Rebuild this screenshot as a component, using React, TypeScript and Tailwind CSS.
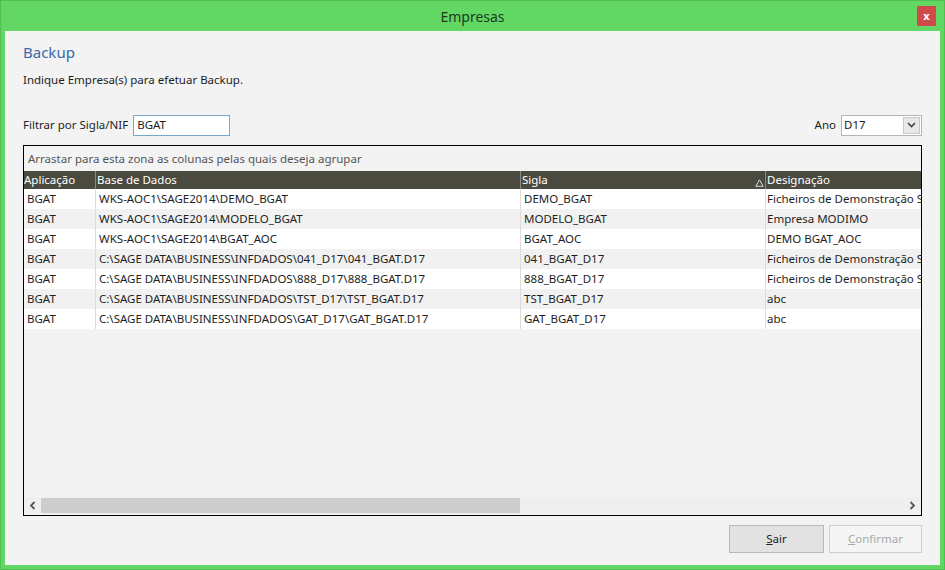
import React from "react";

const rows = [
  ["BGAT", "WKS-AOC1\\SAGE2014\\DEMO_BGAT", "DEMO_BGAT", "Ficheiros de Demonstração Sage"],
  ["BGAT", "WKS-AOC1\\SAGE2014\\MODELO_BGAT", "MODELO_BGAT", "Empresa MODIMO"],
  ["BGAT", "WKS-AOC1\\SAGE2014\\BGAT_AOC", "BGAT_AOC", "DEMO BGAT_AOC"],
  ["BGAT", "C:\\SAGE DATA\\BUSINESS\\INFDADOS\\041_D17\\041_BGAT.D17", "041_BGAT_D17", "Ficheiros de Demonstração Sage"],
  ["BGAT", "C:\\SAGE DATA\\BUSINESS\\INFDADOS\\888_D17\\888_BGAT.D17", "888_BGAT_D17", "Ficheiros de Demonstração Sage"],
  ["BGAT", "C:\\SAGE DATA\\BUSINESS\\INFDADOS\\TST_D17\\TST_BGAT.D17", "TST_BGAT_D17", "abc"],
  ["BGAT", "C:\\SAGE DATA\\BUSINESS\\INFDADOS\\GAT_D17\\GAT_BGAT.D17", "GAT_BGAT_D17", "abc"],
];

export default function App() {
  return (
    <div
      className="w-[945px] h-[570px] bg-[#63d764] border border-[#4fbf52] flex flex-col overflow-hidden"
      style={{ fontFamily: '"Noto Sans", "Open Sans", sans-serif' }}
    >
      <div className="h-[30px] relative flex items-center justify-center shrink-0">
        <span className="text-[14px] text-[#1b3d1b]">Empresas</span>
        <div className="absolute right-[8px] top-[5px] w-[19px] h-[20px] bg-[#cf4b4b] flex items-center justify-center text-white text-[11px] font-bold leading-none pb-[2px]">
          x
        </div>
      </div>
      <div className="mx-[4px] mb-[4px] flex-1 bg-[#f3f3f3] px-[18px] flex flex-col text-[11.5px] text-[#1e1e1e]">
        <div className="mt-[11px] text-[15px] leading-[20px] text-[#3a68a8]">Backup</div>
        <div className="mt-[10px] leading-[16px]">Indique Empresa(s) para efetuar Backup.</div>
        <div className="mt-[26px] flex items-center h-[22px]">
          <span>Filtrar por Sigla/NIF</span>
          <div className="ml-[5px] w-[97px] h-[21px] border border-[#7aa7c9] bg-white flex items-center px-[3px]">BGAT</div>
          <div className="flex-1" />
          <span className="mr-[5px]">Ano</span>
          <div className="w-[81px] h-[21px] border border-[#b5b5b5] bg-white flex items-center">
            <span className="pl-[2px] flex-1">D17</span>
            <div className="w-[17px] h-[17px] mr-[1px] border border-[#c9c9c9] bg-[#e8e8e8] flex items-center justify-center">
              <svg width="9" height="6" viewBox="0 0 9 6">
                <path d="M1 1 L4.5 4.5 L8 1" stroke="#444" strokeWidth="1.6" fill="none" />
              </svg>
            </div>
          </div>
        </div>
        <div className="mt-[9px] h-[371px] border border-black bg-[#f3f3f3] flex flex-col">
          <div className="h-[25px] flex items-center pl-[4px] text-[#555]">
            Arrastar para esta zona as colunas pelas quais deseja agrupar
          </div>
          <div className="h-[18px] bg-[#4b4a40] text-white flex leading-[18px] overflow-hidden">
            <div className="w-[72px] shrink-0 border-r border-[#8a8a80]">Aplicação</div>
            <div className="w-[425px] shrink-0 border-r border-[#8a8a80] pl-[1px]">Base de Dados</div>
            <div className="w-[245px] shrink-0 border-r border-[#8a8a80] pl-[1px] relative">
              Sigla
              <svg className="absolute right-[1px] top-[8px]" width="9" height="8" viewBox="0 0 9 8">
                <path d="M4.5 0.8 L8.2 7.3 L0.8 7.3 Z" stroke="#ddd" strokeWidth="1" fill="none" />
              </svg>
            </div>
            <div className="flex-1 whitespace-nowrap pl-[1px]">Designação</div>
          </div>
          <div className="flex flex-col">
            {rows.map((r, i) => (
              <div
                key={i}
                className={`h-[20px] flex leading-[20px] whitespace-nowrap overflow-hidden ${i % 2 === 0 ? "bg-white" : "bg-[#f1f1f1]"}`}
              >
                <div className="w-[72px] shrink-0 border-r border-[#dcdcdc] pl-[3px]">{r[0]}</div>
                <div className="w-[425px] shrink-0 border-r border-[#dcdcdc] pl-[3px]">{r[1]}</div>
                <div className="w-[245px] shrink-0 border-r border-[#dcdcdc] pl-[3px]">{r[2]}</div>
                <div className="flex-1 overflow-hidden pl-[1px]">{r[3]}</div>
              </div>
            ))}
          </div>
          <div className="flex-1" />
          <div className="h-[17px] mb-[1px] bg-[#efefef] flex items-center">
            <div className="w-[17px] flex items-center justify-center">
              <svg width="7" height="9" viewBox="0 0 7 9">
                <path d="M5.5 1 L2 4.5 L5.5 8" stroke="#555" strokeWidth="1.8" fill="none" />
              </svg>
            </div>
            <div className="w-[479px] h-[15px] bg-[#cdcdcd]" />
            <div className="flex-1" />
            <div className="w-[17px] flex items-center justify-center">
              <svg width="7" height="9" viewBox="0 0 7 9">
                <path d="M1.5 1 L5 4.5 L1.5 8" stroke="#555" strokeWidth="1.8" fill="none" />
              </svg>
            </div>
          </div>
        </div>
        <div className="mt-[9px] flex justify-end gap-[5px]">
          <div className="w-[95px] h-[28px] border border-[#b8b8b8] bg-[#e2e2e2] flex items-center justify-center text-[#1e1e1e]">
            <span><span className="underline">S</span>air</span>
          </div>
          <div className="w-[93px] h-[28px] border border-[#cfcfcf] bg-[#f5f5f5] flex items-center justify-center text-[#a8a8a8]">
            <span><span className="underline">C</span>onfirmar</span>
          </div>
        </div>
      </div>
    </div>
  );
}
